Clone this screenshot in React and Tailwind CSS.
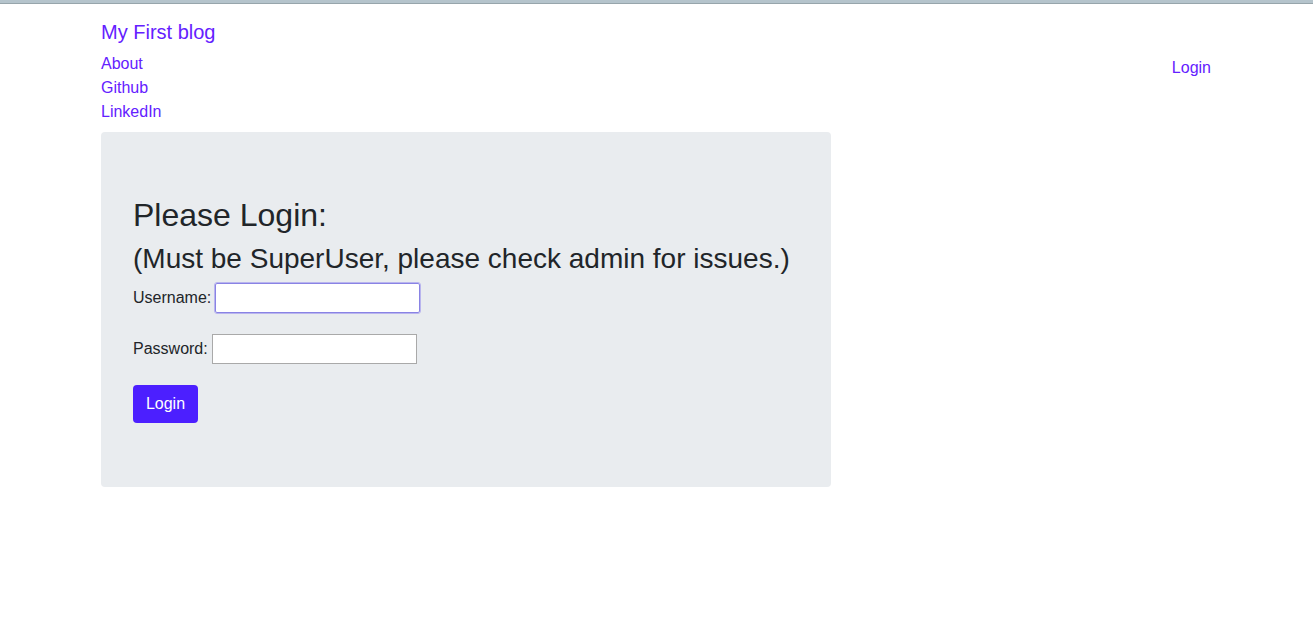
export default function App() {
  return (
    <div className="min-h-[641px] bg-white text-[#212529]" style={{ fontFamily: '"Liberation Sans", Arial, sans-serif' }}>
      <div className="h-[3px] bg-[#b5c4cc]" />
      <div className="h-px bg-[#97a5ab]" />
      <div className="mx-auto w-[1141px] pl-[15px] pr-[16px]">
        <div className="flex justify-between">
          <div className="pt-[13px]">
            <a href="#" className="block h-[30px] text-[20px] leading-[30px] text-[#6421ff]">My First blog</a>
            <ul className="mt-[5px] text-[16px] leading-6">
              <li><a href="#" className="text-[#6421ff]">About</a></li>
              <li><a href="#" className="text-[#6421ff]">Github</a></li>
              <li><a href="#" className="text-[#6421ff]">LinkedIn</a></li>
            </ul>
          </div>
          <div className="pt-[52px]">
            <a href="#" className="text-[16px] leading-6 text-[#6421ff]">Login</a>
          </div>
        </div>
        <div className="mt-[8px] w-[730px] rounded-[4px] bg-[#e9ecef] px-8 pt-16 pb-[64px]">
          <h2 className="text-[32px] leading-[38.4px] mb-2">Please Login:</h2>
          <h3 className="text-[28px] leading-[33.6px] mb-[7px]">(Must be SuperUser, please check admin for issues.)</h3>
          <form className="flex flex-col gap-[21px]">
            <div className="flex h-[30px] items-center text-[16px]">
              <label className="mr-[4px]">Username:</label>
              <input type="text" className="h-[30px] w-[205px] rounded-[2px] border border-[#8983e4] bg-white outline outline-1 outline-[#b9b5ee]" />
            </div>
            <div className="flex h-[30px] items-center text-[16px]">
              <label className="mr-[4px]">Password:</label>
              <input type="password" className="h-[30px] w-[205px] border border-[#a9a9a9] bg-white outline-none" />
            </div>
            <div>
              <button type="button" className="h-[38px] w-[65px] rounded-[4px] bg-[#4c1fff] text-[16px] leading-6 text-white">Login</button>
            </div>
          </form>
        </div>
      </div>
    </div>
  );
}
